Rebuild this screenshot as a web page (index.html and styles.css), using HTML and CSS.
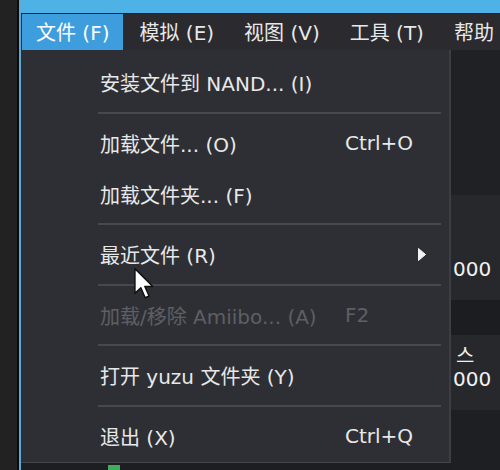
FILE: index.html
```html
<!DOCTYPE html>
<html lang="zh">
<head>
<meta charset="utf-8">
<title>yuzu menu</title>
<link rel="stylesheet" href="styles.css">
</head>
<body>
<div class="screen">
  <div class="edge"></div>
  <div class="window">
    <div class="titlebar"></div>
    <nav class="menubar">
      <span class="mitem active">文件 (F)</span>
      <span class="mitem">模拟 (E)</span>
      <span class="mitem">视图 (V)</span>
      <span class="mitem">工具 (T)</span>
      <span class="mitem">帮助</span>
    </nav>
    <div class="body">
      <div class="dropcol">
        <div class="menu">
          <div class="item"><span>安装文件到 NAND... (I)</span></div>
          <div class="sep"></div>
          <div class="item"><span>加载文件... (O)</span><span>Ctrl+O</span></div>
          <div class="item"><span>加载文件夹... (F)</span></div>
          <div class="sep"></div>
          <div class="item"><span>最近文件 (R)</span><svg class="arrow" viewBox="0 0 10 15"><path d="M1.5 1.5 L8.5 7.5 L1.5 13.5 Z" fill="#f2f2f2" stroke="#f2f2f2" stroke-width="1" stroke-linejoin="round"/></svg></div>
          <div class="sep"></div>
          <div class="item disabled"><span>加载/移除 Amiibo... (A)</span><span>F2</span></div>
          <div class="sep"></div>
          <div class="item"><span>打开 yuzu 文件夹 (Y)</span></div>
          <div class="sep"></div>
          <div class="item"><span>退出 (X)</span><span>Ctrl+Q</span></div>
        </div>
        <div class="below"><span class="green"></span></div>
      </div>
      <div class="behind">
        <div class="blk dark1"></div>
        <div class="blk card c1"><span class="num">000</span></div>
        <div class="blk dark2"></div>
        <div class="blk card c2"><span class="ko">스</span><span class="num">000</span></div>
        <div class="blk dark3"></div>
      </div>
    </div>
  </div>
  <svg class="cursor" viewBox="0 0 13 20" width="22" height="33"><path d="M1 1 L1 16 L4.6 12.6 L7.2 18.6 L9.6 17.6 L7 11.8 L11.8 11.8 Z" fill="#ffffff" stroke="#111" stroke-width="0.9" stroke-linejoin="round"/></svg>
</div>
</body>
</html>
```

FILE: styles.css
```css
html, body {
  margin: 0;
  padding: 0;
}
body {
  width: 500px;
  height: 470px;
  overflow: hidden;
  background: #1e1e1e;
  font-family: "DejaVu Sans", "Noto Sans CJK SC", "Noto Sans CJK KR", sans-serif;
  font-size: 20px;
  color: #e8e8e8;
}
.screen {
  display: flex;
  height: 470px;
  position: relative;
}
.edge {
  width: 17px;
  flex: none;
  background: #222222;
  border-right: 2px solid #0c0c0c;
}
.window {
  flex: 1;
  min-width: 0;
  display: flex;
  flex-direction: column;
  border-left: 2px solid #5eaad6;
}
.titlebar {
  height: 13px;
  flex: none;
  background: #4fb2e7;
  border-bottom: 1px solid #2a1e23;
}
.menubar {
  height: 36px;
  flex: none;
  display: flex;
  gap: 2px;
  padding-left: 1px;
  background: #2a2a2f;
  white-space: nowrap;
  overflow: hidden;
}
.mitem {
  flex: none;
  padding: 0 14px;
  line-height: 38px;
}
.mitem.active {
  background: #3e9ddd;
  color: #ffffff;
}
.body {
  flex: 1;
  min-height: 0;
  display: flex;
}
.dropcol {
  width: 430px;
  flex: none;
  display: flex;
  flex-direction: column;
}
.menu {
  background: #2e2f34;
  border-right: 2px solid #3d3e43;
  border-bottom: 1px solid #45464b;
  padding-top: 7px;
}
.item {
  height: 51px;
  display: grid;
  grid-template-columns: 245px 1fr;
  align-items: center;
  padding-left: 79px;
  white-space: nowrap;
}
.item.disabled {
  color: #5e5f64;
}
.arrow {
  width: 10px;
  height: 15px;
  margin-left: 72px;
}
.sep {
  height: 2px;
  background: #48494e;
  margin: 3.75px 8px 3.75px 77px;
}
.below {
  flex: 1;
  background: #1d1e22;
  display: flex;
  align-items: flex-end;
}
.green {
  width: 12px;
  height: 5px;
  margin-left: 87px;
  background: #3fae5a;
}
.behind {
  flex: 1;
  min-width: 0;
  display: flex;
  flex-direction: column;
  overflow: hidden;
  background: #202125;
}
.blk {
  flex: none;
}
.dark1 {
  height: 145px;
  background: #202125;
}
.card {
  background: #27282c;
  display: flex;
  flex-direction: column;
  padding-left: 2px;
}
.c1 {
  height: 105px;
  justify-content: flex-end;
  padding-bottom: 19px;
  box-sizing: border-box;
}
.dark2 {
  height: 35px;
  background: #1c1d21;
}
.c2 {
  height: 75px;
  box-sizing: border-box;
  padding-top: 8px;
}
.dark3 {
  flex: 1;
  background: #1e1f23;
}
.num {
  color: #f2f2f2;
  line-height: 24px;
}
.ko {
  font-family: "Noto Sans CJK KR", sans-serif;
  line-height: 24px;
  padding-left: 3px;
  color: #eeeeee;
}
.cursor {
  position: absolute;
  left: 133px;
  top: 267px;
}
```
